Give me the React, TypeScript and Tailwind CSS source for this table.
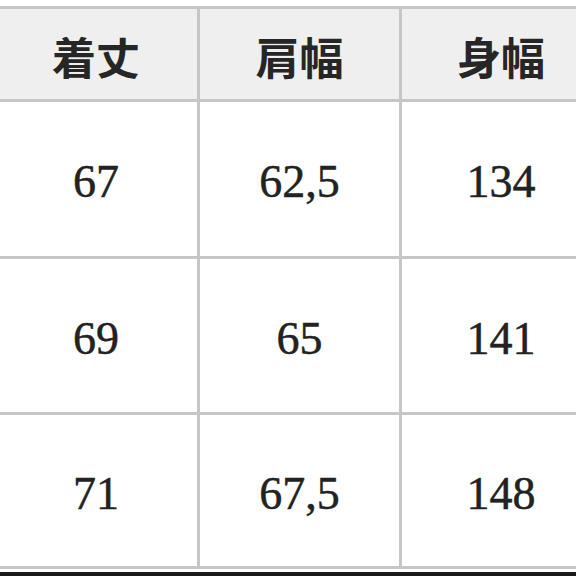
import React from "react";

const headers = ["着丈", "肩幅", "身幅"];
const rows = [
  { h: "h-[154px]", cells: ["67", "62,5", "134"] },
  { h: "h-[153px]", cells: ["69", "65", "141"] },
  { h: "h-[151px]", cells: ["71", "67,5", "148"] },
];

export default function App() {
  return (
    <div className="w-[576px] h-[576px] bg-white overflow-hidden flex flex-col">
      <div className="mt-[6px] ml-[-5px] w-[605px] bg-[#c6c6c6] pt-[3px] pb-[3px] grid grid-cols-[202px_199px_198px] gap-[3px]">
        {headers.map((t) => (
          <div
            key={t}
            className="h-[90px] bg-[#efefef] flex items-center justify-center pt-[4px] text-[44px] leading-none font-bold text-[#262626]"
            style={{ fontFamily: '"Noto Sans CJK JP", "Noto Sans CJK SC", sans-serif' }}
          >
            {t}
          </div>
        ))}
        {rows.map((r) =>
          r.cells.map((c, i) => (
            <div
              key={r.cells[0] + i}
              className={`${r.h} bg-white flex items-center justify-center pt-[6px] text-[46px] leading-none text-[#222222] [-webkit-text-stroke:0.5px_#222222]`}
              style={{ fontFamily: '"Liberation Serif", "Times New Roman", serif' }}
            >
              {c}
            </div>
          ))
        )}
      </div>
      <div className="h-[3px] bg-white" />
      <div className="h-[4px] bg-[#1a1a1a]" />
    </div>
  );
}
